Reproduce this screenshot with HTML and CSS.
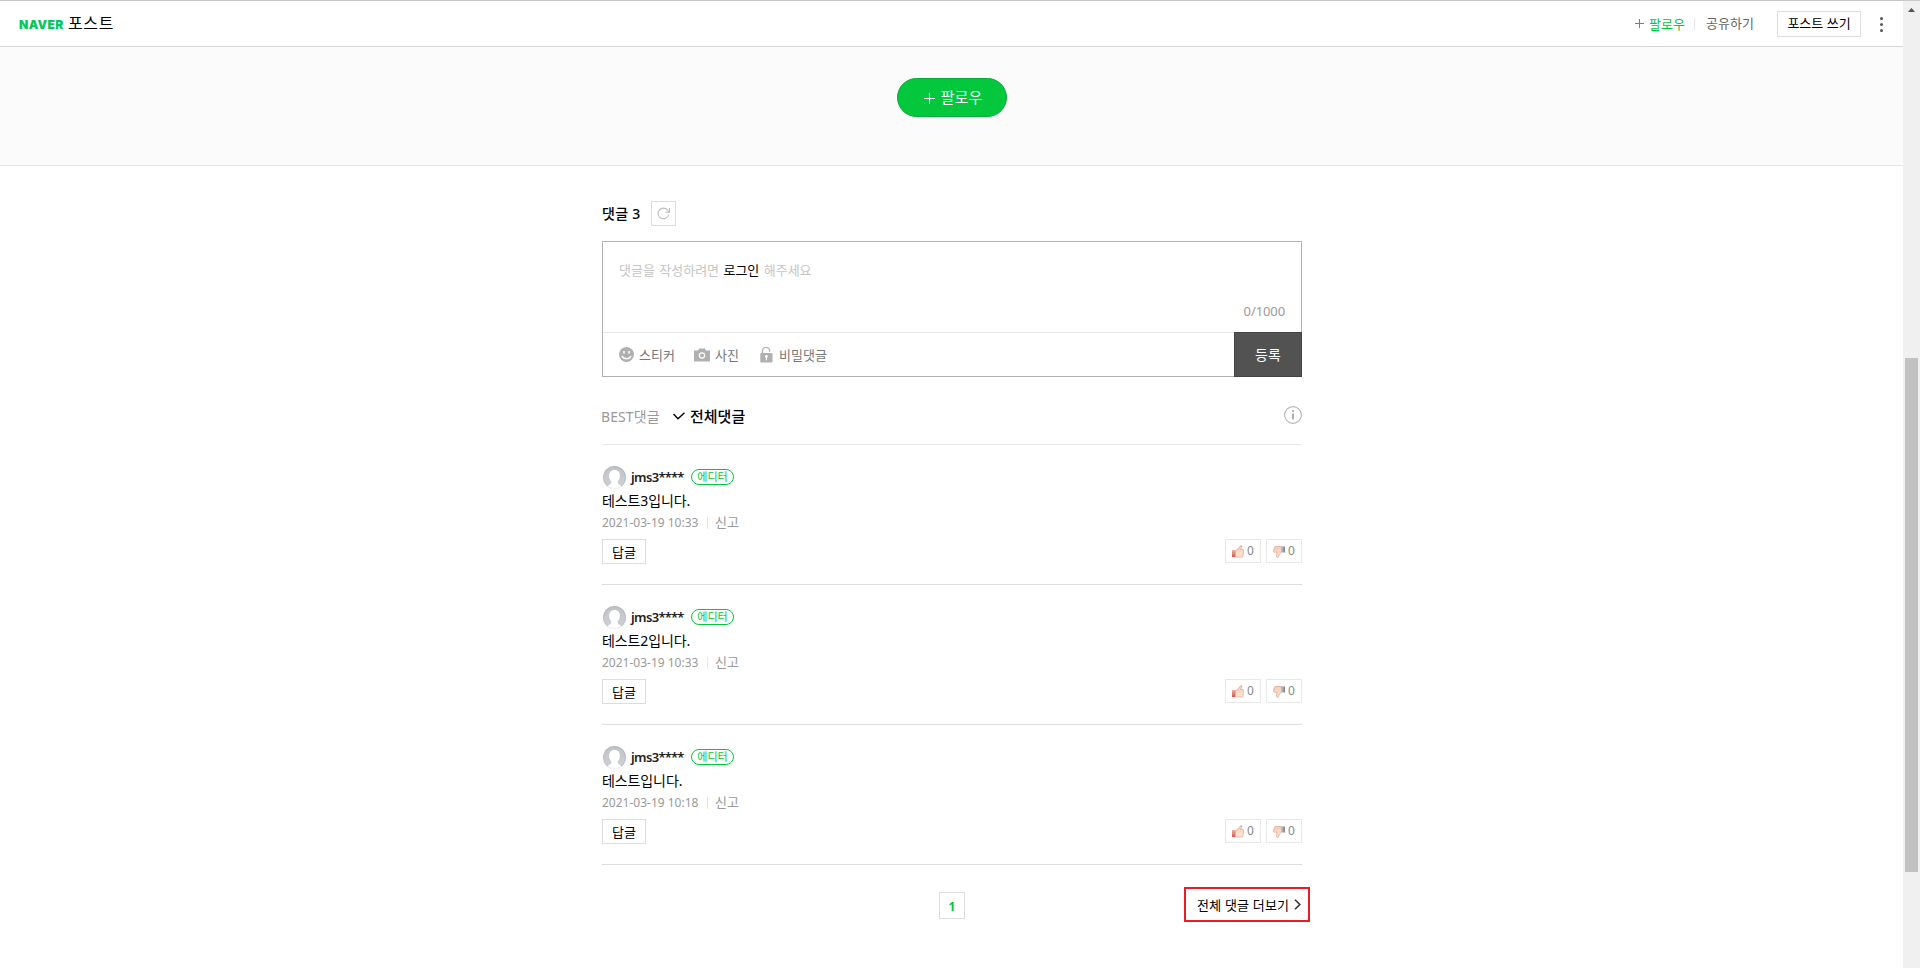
FILE: index.html
```html
<!DOCTYPE html>
<html lang="ko">
<head>
<meta charset="utf-8">
<title>네이버 포스트</title>
<link rel="stylesheet" href="styles.css">
</head>
<body>
<svg class="defs" width="0" height="0">
  <defs>
    <linearGradient id="hand" x1="0" y1="0" x2="0" y2="1"><stop offset="0" stop-color="#f3cbb5"/><stop offset="1" stop-color="#fce8db"/></linearGradient>
    <linearGradient id="red" x1="0" y1="0" x2="0" y2="1"><stop offset="0" stop-color="#f0b09c"/><stop offset="1" stop-color="#d9534f"/></linearGradient>
    <linearGradient id="blue" x1="0" y1="0" x2="1" y2="0"><stop offset="0" stop-color="#c3bfc0"/><stop offset="1" stop-color="#71819a"/></linearGradient>
    <linearGradient id="face" x1="0" y1="0" x2="0" y2="1"><stop offset="0" stop-color="#bfc2c7"/><stop offset="1" stop-color="#d0d2d5"/></linearGradient>
    <clipPath id="round"><circle cx="11.5" cy="11.5" r="11.5"/></clipPath>
    <symbol id="avatar" viewBox="0 0 23 23"><g clip-path="url(#round)"><rect width="23" height="23" fill="url(#face)"/><path d="M11.5 4c3.500 0 5.400 2.400 5.400 5.500 0 2.600-.9 4.600-2.200 6-.2 2 .6 2.800 2.600 3.800 1.200.6 1.700 1.700 1.800 3.700H3.900c.1-2 .6-3.100 1.800-3.700 2-1 2.800-1.800 2.600-3.800-1.300-1.400-2.200-3.400-2.200-6C6.100 6.400 8 4 11.500 4z" fill="#fff"/></g><circle cx="11.500" cy="11.500" r="11" fill="none" stroke="#000" stroke-opacity=".07"/></symbol>
    <symbol id="up" viewBox="0 0 12 13"><path d="M0 5h3.500v7H0z" fill="url(#red)"/><path d="M3.500 5.500 6 4 8.500.8 9.700.5l.2 1.300L8.500 4.500H11l.5 1-.4 5-1 1.500H3.500z" fill="url(#hand)" stroke="#dfa287" stroke-width=".7"/></symbol>
    <symbol id="down" viewBox="0 0 12 13"><path d="M8.500 1.500H12v6H8.500z" fill="url(#blue)"/><path d="M8.500 1.500H2L1.200 3 .5 6.200l.6 1h3L3.500 11l.8 1.500 1-.5L6.500 9l2-1.800z" fill="url(#hand)" stroke="#dfa287" stroke-width=".7"/></symbol>
  </defs>
</svg>
<div class="window">
  <div class="page">
    <header class="header">
      <div class="logo"><span class="naver">NAVER</span><span class="post">포스트</span></div>
      <nav class="nav">
        <a class="follow-link"><svg width="9" height="9" viewBox="0 0 9 9"><path d="M4.500 0v9M0 4.500h9" stroke="#00c73c" fill="none"/></svg>팔로우</a>
        <a class="share">공유하기</a>
        <a class="write">포스트 쓰기</a>
        <svg class="dots" width="3" height="15" viewBox="0 0 3 15" fill="#555"><circle cx="1.500" cy="1.500" r="1.500"/><circle cx="1.500" cy="7.500" r="1.500"/><circle cx="1.500" cy="13.500" r="1.500"/></svg>
      </nav>
    </header>
    <section class="hero">
      <button class="follow"><svg width="11" height="11" viewBox="0 0 11 11"><path d="M5.500 0v11M0 5.500h11" stroke="#fff" fill="none"/></svg><span>팔로우</span></button>
    </section>
    <main class="comments">
      <div class="title"><h2>댓글 3</h2>
        <button class="refresh"><svg width="13" height="13" viewBox="0 0 13 13" fill="none" stroke="#bbb" stroke-width="1.100"><path d="M11.600 7.500A5.300 5.300 0 1 1 10.800 3.500L12 5M12.400 1v4.200H8.200"/></svg></button>
      </div>
      <div class="editor">
        <div class="field"><p class="hint">댓글을 작성하려면 <b>로그인</b> 해주세요</p><span class="count">0/1000</span></div>
        <div class="tools">
          <span class="tool sticker"><svg width="15" height="15" viewBox="0 0 15 15"><circle cx="7.500" cy="7.500" r="7.500" fill="#b0b0b0"/><path d="M5 4v2.600M10 4v2.600" stroke="#fff" stroke-width="1.500"/><path d="M3 9c1.300 3.600 7.700 3.600 9 0" stroke="#fff" stroke-width="1.300" fill="none"/></svg>스티커</span>
          <span class="tool photo"><svg width="16" height="14" viewBox="0 0 16 14"><path d="M0 2.500h4L5.200.5h5.600L12 2.500h4v11H0z" fill="#b0b0b0"/><circle cx="8" cy="7.500" r="2.600" fill="none" stroke="#fff" stroke-width="1.200"/></svg>사진</span>
          <span class="tool secret"><svg width="13" height="16" viewBox="0 0 13 16"><path d="M2.500 7V4.300a3.600 3.600 0 0 1 7.200-.6v1" fill="none" stroke="#b0b0b0" stroke-width="1.300"/><rect x=".3" y="6" width="12.200" height="9.500" rx=".8" fill="#b0b0b0"/><circle cx="6.400" cy="9.500" r="1.400" fill="#fff"/><path d="M6.400 9.500v3.700" stroke="#fff" stroke-width="1.200"/></svg>비밀댓글</span>
          <button class="submit">등록</button>
        </div>
      </div>
      <div class="tabs">
        <span class="best">BEST댓글</span>
        <span class="all"><svg width="12" height="8" viewBox="0 0 12 8"><path d="M.5 2 5 6.700 11.500.7" stroke="#000" stroke-width="1.400" fill="none"/></svg><span>전체댓글</span></span>
        <svg class="info" width="18" height="18" viewBox="0 0 18 18"><circle cx="9" cy="9" r="8.400" fill="none" stroke="#b5b5b5" stroke-width="1.100"/><path d="M9 4.200v1.900M9 7.500v6" stroke="#aaa" stroke-width="1.900"/></svg>
      </div>
      <article class="item">
        <div class="who"><svg class="avatar"><use href="#avatar"/></svg><strong>jms3<span>****</span></strong><em>에디터</em></div>
        <p class="text">테스트3입니다.</p>
        <div class="meta"><time>2021-03-19 10:33</time><a>신고</a></div>
        <div class="actions"><button class="reply">답글</button><span class="vote"><svg><use href="#up"/></svg>0</span><span class="vote"><svg><use href="#down"/></svg>0</span></div>
      </article>
      <article class="item">
        <div class="who"><svg class="avatar"><use href="#avatar"/></svg><strong>jms3<span>****</span></strong><em>에디터</em></div>
        <p class="text">테스트2입니다.</p>
        <div class="meta"><time>2021-03-19 10:33</time><a>신고</a></div>
        <div class="actions"><button class="reply">답글</button><span class="vote"><svg><use href="#up"/></svg>0</span><span class="vote"><svg><use href="#down"/></svg>0</span></div>
      </article>
      <article class="item">
        <div class="who"><svg class="avatar"><use href="#avatar"/></svg><strong>jms3<span>****</span></strong><em>에디터</em></div>
        <p class="text">테스트입니다.</p>
        <div class="meta"><time>2021-03-19 10:18</time><a>신고</a></div>
        <div class="actions"><button class="reply">답글</button><span class="vote"><svg><use href="#up"/></svg>0</span><span class="vote"><svg><use href="#down"/></svg>0</span></div>
      </article>
      <div class="paging">
        <span class="current">1</span>
        <a class="more">전체 댓글 더보기<svg width="7" height="11" viewBox="0 0 7 11"><path d="M1 .7 5.800 5.500 1 10.300" stroke="#333" stroke-width="1.600" fill="none"/></svg></a>
      </div>
    </main>
  </div>
  <aside class="scrollbar"><svg width="7" height="4" viewBox="0 0 7 4"><path d="M0 4 3.500 0 7 4z" fill="#505050"/></svg><div class="thumb"></div></aside>
</div>
</body>
</html>
```
FILE: styles.css
```css
* { box-sizing: border-box; margin: 0; padding: 0; }
body { font-family: "Noto Sans", "Noto Sans CJK KR", sans-serif; font-size: 13px; line-height: 18px; color: #000; background: #fff; overflow: hidden; white-space: nowrap; }
button { font: inherit; background: none; border: 0; }
svg { display: block; flex: none; }
.defs { position: absolute; }
.window { display: flex; height: 968px; border-top: 1px solid #c8c8c8; }
.page { width: 1903px; }
.header { display: flex; align-items: center; justify-content: space-between; height: 46px; padding: 0 20px 0 19px; border-bottom: 1px solid #d6d6d6; }
.logo { display: flex; align-items: center; }
.naver { width: 49px; font: 900 12px/18px Inter, sans-serif; letter-spacing: .4px; color: #03c75a; padding-top: 2px; }
.post { font-size: 16px; line-height: 22px; letter-spacing: .6px; padding-bottom: 1px; }
.nav { display: flex; align-items: center; height: 45px; }
.follow-link { display: flex; align-items: center; gap: 5px; color: #00c73c; width: 60px; height: 12px; border-right: 1px solid #e5e5e5; line-height: 12px; }
.share { color: #666; width: 82px; padding: 0 0 1px 11px; }
.write { width: 84px; height: 26px; border: 1px solid #ddd; line-height: 23px; text-align: center; }
.dots { margin: 1px 0 0 19px; }
.hero { height: 119px; padding-top: 31px; background: #fbfbfb; border-bottom: 1px solid #e5e5e5; }
.follow { display: flex; align-items: center; justify-content: center; gap: 6px; width: 110px; height: 39px; margin-left: 897px; padding: 1px 0 0 2px; border: 1px solid #05ab38; border-radius: 20px; background: #03c73c; color: #fff; font-size: 15px; }
.follow span { padding-bottom: 2px; }
.comments { width: 700px; margin-left: 602px; }
.title { display: flex; align-items: center; height: 75px; padding-top: 20px; }
.title h2 { width: 49px; font-size: 14px; font-weight: 500; letter-spacing: .3px; }
.refresh { display: flex; align-items: center; justify-content: center; width: 25px; height: 25px; border: 1px solid #ddd; }
.editor { height: 136px; border: 1px solid #b0b0b0; }
.field { display: flex; flex-direction: column; height: 90px; padding: 19px 16px 0 16px; }
.hint { color: #c5c5c5; word-spacing: 1px; }
.hint b { font-weight: 400; color: #000; }
.count { align-self: flex-end; margin-top: 23px; color: #999; letter-spacing: -.1px; }
.tools { display: flex; align-items: center; height: 44px; margin-right: -1px; padding-left: 16px; border-top: 1px solid #e8e8e8; color: #777; }
.tool { display: flex; align-items: center; gap: 5px; }
.sticker { width: 75px; }
.photo { width: 66px; }
.secret { gap: 6px; }
.submit { width: 68px; height: 45px; margin: -1px 0 -1px auto; background: #525252; border: 1px solid #444; color: #fff; font-size: 14px; }
.tabs { display: flex; align-items: center; height: 68px; padding-top: 12px; border-bottom: 1px solid #e8e8e8; font-size: 14px; }
.best { width: 72px; margin-left: -1px; color: #999; letter-spacing: .1px; }
.all { display: flex; align-items: center; gap: 5px; font-weight: 500; font-size: 15px; }
.all span { margin-top: -2px; }
.all svg { margin-top: -2px; }
.info { margin: -4px 0 0 auto; }
.item { height: 140px; padding-top: 21px; border-bottom: 1px solid #ddd; }
.who { display: flex; align-items: center; height: 23px; padding-left: 1px; }
.avatar { width: 23px; height: 23px; }
.who strong { width: 60px; margin: -2px 0 0 5px; font-weight: 600; letter-spacing: -.6px; color: #222; }
.who strong span { letter-spacing: -.9px; }
.who em { width: 43px; height: 16px; margin-top: -1px; border: 1px solid #00c73c; border-radius: 8px; color: #00c73c; font-size: 11px; line-height: 14px; font-style: normal; text-align: center; }
.text { height: 24px; font-size: 14px; line-height: 24px; letter-spacing: -.1px; }
.meta { display: flex; align-items: center; height: 20px; color: #999; font-size: 12px; }
.meta time { width: 105px; margin-top: -1px; }
.meta a { height: 12px; line-height: 10px; padding-left: 7px; border-left: 1px solid #e5e5e5; font-size: 13px; }
.actions { display: flex; height: 25px; margin-top: 6px; gap: 5px; }
.reply { width: 44px; height: 25px; margin-right: auto; border: 1px solid #ddd; line-height: 22px; }
.vote { display: flex; align-items: center; width: 36px; height: 24px; padding-left: 6px; gap: 3px; border: 1px solid #e8e8e8; color: #888; font-size: 12px; }
.vote svg { width: 12px; height: 13px; }
.paging { display: flex; align-items: flex-start; padding: 22px 0 0 337px; margin-right: -8px; }
.current { flex: none; width: 26px; height: 27px; margin-top: 5px; border: 1px solid #ddd; color: #00c73c; font-weight: 700; font-size: 12px; line-height: 27px; text-align: center; margin-right: 219px; }
.more { display: flex; align-items: center; gap: 5px; flex: none; width: 126px; height: 35px; padding: 0 0 0 11px; border: 2px solid #ed1c24; letter-spacing: .2px; }
.scrollbar { width: 17px; padding: 7px 2px 0; background: #f0f0f0; }
.scrollbar svg { margin-left: 3px; }
.thumb { width: 13px; height: 514px; margin-top: 346px; background: #c1c1c1; }
```
